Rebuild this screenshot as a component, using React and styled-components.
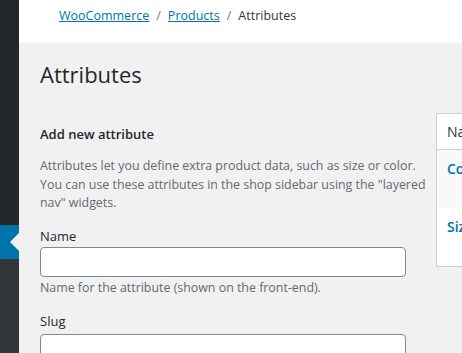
import styled, { createGlobalStyle } from "styled-components";

const GlobalStyle = createGlobalStyle`
  html, body {
    margin: 0;
    padding: 0;
    background: #f1f1f1;
    font-family: "Open Sans", "Noto Sans", sans-serif;
    color: #23282d;
    overflow: hidden;
  }
`;

const Page = styled.div`
  display: flex;
  flex-direction: row;
  width: 462px;
  height: 353px;
  overflow: hidden;
`;

const Sidebar = styled.div`
  display: flex;
  flex-direction: column;
  width: 19px;
  flex-shrink: 0;
  background: #32373c;
`;

const SideBlock = styled.div`
  height: 225px;
  flex-shrink: 0;
  background: #23282d;
`;

const SideActive = styled.div`
  position: relative;
  height: 34px;
  flex-shrink: 0;
  background: #0073aa;

  &::after {
    content: "";
    position: absolute;
    right: 0;
    top: 8px;
    border: 9px solid transparent;
    border-right-color: #f1f1f1;
    border-left-width: 0;
    width: 0;
    height: 0;
  }
`;

const Main = styled.div`
  flex: 1;
  display: flex;
  flex-direction: column;
  min-width: 0;
`;

const TopBar = styled.div`
  display: flex;
  align-items: center;
  gap: 7px;
  height: 43px;
  flex-shrink: 0;
  padding: 0 0 12px 40px;
  box-sizing: border-box;
  background: #fff;
  font-size: 12.5px;
  color: #32373c;
`;

const Crumb = styled.a`
  color: #0073aa;
  text-decoration: underline;
`;

const Sep = styled.span`
  color: #72777c;
`;

const Content = styled.div`
  padding: 0 0 0 21px;
`;

const Title = styled.h1`
  margin: 16px 0 0;
  font-size: 22px;
  font-weight: 400;
  line-height: 30px;
  color: #23282d;
`;

const Columns = styled.div`
  display: flex;
  flex-direction: row;
  gap: 8px;
  margin-top: 24px;
`;

const FormCol = styled.div`
  width: 388px;
  flex-shrink: 0;
`;

const FormTitle = styled.h2`
  margin: 11px 0 13px;
  font-size: 13px;
  font-weight: 600;
  line-height: 20px;
`;

const Hint = styled.p`
  margin: ${(p) => p.$margin || "0"};
  font-size: 12.4px;
  line-height: 18.5px;
  color: #646970;
`;

const Label = styled.label`
  display: block;
  margin: ${(p) => p.$margin || "0"};
  font-size: 13px;
  line-height: 18px;
  color: #23282d;
`;

const Input = styled.input`
  display: block;
  width: 366px;
  height: 30px;
  box-sizing: border-box;
  border: 1px solid #7e8993;
  border-radius: 4px;
  background: #fff;
  padding: 0 8px;
  font: inherit;
`;

const TableCol = styled.div`
  flex: 1;
  min-width: 0;
`;

const Table = styled.div`
  border: 1px solid #ccd0d4;
  border-right: none;
  background: #fff;
`;

const Row = styled.div`
  height: ${(p) => p.$h}px;
  box-sizing: border-box;
  padding: ${(p) => (p.$head ? "9px 10px" : "10px 10px")};
  background: ${(p) => (p.$alt ? "#f9f9f9" : "#fff")};
  border-bottom: ${(p) => (p.$head ? "1px solid #ccd0d4" : "none")};
  font-size: 14px;
  line-height: 18px;
  white-space: nowrap;
  overflow: hidden;
  color: #32373c;
`;

const RowLink = styled.a`
  color: #0073aa;
  font-weight: 600;
  text-decoration: none;
`;

export default function App() {
  return (
    <>
      <GlobalStyle />
      <Page>
        <Sidebar>
          <SideBlock />
          <SideActive />
        </Sidebar>
        <Main>
          <TopBar>
            <Crumb href="#">WooCommerce</Crumb>
            <Sep>/</Sep>
            <Crumb href="#">Products</Crumb>
            <Sep>/</Sep>
            <span>Attributes</span>
          </TopBar>
          <Content>
            <Title>Attributes</Title>
            <Columns>
              <FormCol>
                <FormTitle>Add new attribute</FormTitle>
                <Hint>
                  Attributes let you define extra product data, such as size or color. You can use
                  these attributes in the shop sidebar using the "layered nav" widgets.
                </Hint>
                <Label $margin="14px 0 2px">Name</Label>
                <Input type="text" />
                <Hint $margin="2px 0 0">Name for the attribute (shown on the front-end).</Hint>
                <Label $margin="15px 0 4px">Slug</Label>
                <Input type="text" />
              </FormCol>
              <TableCol>
                <Table>
                  <Row $head $h={36}>Name</Row>
                  <Row $alt $h={58}>
                    <RowLink href="#">Color</RowLink>
                  </Row>
                  <Row $h={58}>
                    <RowLink href="#">Size</RowLink>
                  </Row>
                </Table>
              </TableCol>
            </Columns>
          </Content>
        </Main>
      </Page>
    </>
  );
}
